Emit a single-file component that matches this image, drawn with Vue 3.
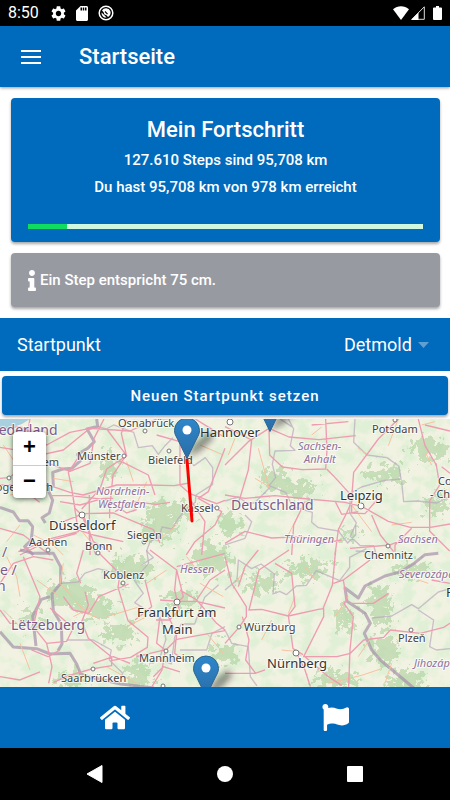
<template>
  <div class="page">
    <!-- Statusleiste -->
    <div class="status-bar">
      <div class="status-group">
        <span class="clock">8:50</span>
        <svg viewBox="2 2 20 20" width="15" height="15">
          <path fill="#fff" d="M19.14 12.94c.04-.3.06-.61.06-.94 0-.32-.02-.64-.07-.94l2.03-1.58c.18-.14.23-.41.12-.61l-1.92-3.32c-.12-.22-.37-.29-.59-.22l-2.39.96c-.5-.38-1.03-.7-1.62-.94l-.36-2.54c-.04-.24-.24-.41-.48-.41h-3.84c-.24 0-.43.17-.47.41l-.36 2.54c-.59.24-1.13.57-1.62.94l-2.39-.96c-.22-.08-.47 0-.59.22L2.74 8.87c-.12.21-.08.47.12.61l2.03 1.58c-.05.3-.09.63-.09.94s.02.64.07.94l-2.03 1.58c-.18.14-.23.41-.12.61l1.92 3.32c.12.22.37.29.59.22l2.39-.96c.5.38 1.03.7 1.62.94l.36 2.54c.05.24.24.41.48.41h3.84c.24 0 .44-.17.47-.41l.36-2.54c.59-.24 1.13-.56 1.62-.94l2.39.96c.22.08.47 0 .59-.22l1.92-3.32c.12-.22.07-.47-.12-.61l-2.01-1.58zM12 15.6c-1.98 0-3.6-1.62-3.6-3.6s1.62-3.6 3.6-3.6 3.6 1.62 3.6 3.6-1.62 3.6-3.6 3.6z" />
        </svg>
        <svg viewBox="4 2 16 20" width="12" height="15">
          <path fill="#fff" d="M18 2h-8L4 8v12c0 1.100.9 2 2 2h12c1.100 0 2-.9 2-2V4c0-1.100-.9-2-2-2zm-6 6h-2V4h2v4zm3 0h-2V4h2v4zm3 0h-2V4h2v4z" />
        </svg>
        <svg viewBox="0 0 16 16" width="16" height="16">
          <circle cx="8" cy="8" r="6.800" fill="none" stroke="#fff" stroke-width="1.500" />
          <path d="M4 5.500a4.700 4.700 0 0 1 8.300.6c1 2.400-.2 5-2.300 5.900L8.200 9.900a2.200 2.200 0 0 1-2.400-2.400zM3.600 7.500l5 5c-2.800.6-5.400-1.800-5-5z" fill="#fff" />
          <path d="M7 6.500l2.500 2.600" stroke="#000" stroke-width="1.200" />
        </svg>
      </div>
      <div class="status-group right">
        <svg viewBox="0 0 16 14" width="16" height="14">
          <path d="M0 3.200C4.500-.9 11.500-.9 16 3.200L8 14z" fill="#fff" />
        </svg>
        <svg viewBox="0 0 14 14" width="14" height="14">
          <path d="M13.300.8v12.500H.9z" fill="none" stroke="#ddd" />
          <path d="M7.500 6.500V14H0z" fill="#fff" />
        </svg>
        <svg class="battery" viewBox="0 0 9 14" width="9" height="14">
          <path d="M3 0h3v1.500h2a1 1 0 0 1 1 1V13a1 1 0 0 1-1 1H1a1 1 0 0 1-1-1V2.500a1 1 0 0 1 1-1h2z" fill="#fff" />
        </svg>
      </div>
    </div>

    <header class="toolbar">
      <button class="menu-button" type="button" aria-label="Menü">
        <svg viewBox="0 0 20 14" width="20" height="14">
          <path d="M0 1h20M0 7h20M0 13h20" stroke="#fff" stroke-width="2" />
        </svg>
      </button>
      <h1>Startseite</h1>
    </header>

    <main class="content">
      <!-- Fortschritt -->
      <section class="card progress-card">
        <h2>Mein Fortschritt</h2>
        <p>{{ steps }} Steps sind {{ format(reachedKm) }} km</p>
        <p>Du hast {{ format(reachedKm) }} km von {{ totalKm }} km erreicht</p>
        <div class="progress" role="progressbar" aria-label="Fortschritt" :aria-valuenow="reachedKm" :aria-valuemax="totalKm">
          <div class="progress-value" :style="{ width: percent + '%' }"></div>
        </div>
      </section>

      <section class="card info-card">
        <svg viewBox="0 0 192 512" width="8" height="21">
          <path fill="#fff" d="M20 424.229h20V279.771H20c-11.046 0-20-8.954-20-20V212c0-11.046 8.954-20 20-20h112c11.046 0 20 8.954 20 20v212.229h20c11.046 0 20 8.954 20 20V492c0 11.046-8.954 20-20 20H20c-11.046 0-20-8.954-20-20v-47.771c0-11.046 8.954-20 20-20zM96 0C56.235 0 24 32.235 24 72s32.235 72 72 72 72-32.235 72-72S135.764 0 96 0z" />
        </svg>
        <span>Ein Step entspricht 75 cm.</span>
      </section>

      <!-- Auswahl Startpunkt -->
      <div class="select-item">
        <label for="startpunkt">Startpunkt</label>
        <div class="select-wrap">
          <select id="startpunkt" v-model="startpunkt">
            <option>Detmold</option>
          </select>
          <svg viewBox="0 0 11 6" width="11" height="6">
            <path d="M0 0h11L5.500 6z" fill="#5f9fd4" />
          </svg>
        </div>
      </div>

      <button class="start-button" type="button">Neuen Startpunkt setzen</button>

      <!-- Karte -->
      <div class="map">
        <svg class="map-canvas" viewBox="0 0 450 268" preserveAspectRatio="xMidYMid slice">
          <defs>
            <filter id="forest" x="0" y="0" width="100%" height="100%">
              <feTurbulence type="fractalNoise" baseFrequency="0.07" numOctaves="5" seed="11" />
              <feColorMatrix values="0 0 0 0 0.74  0 0 0 0 0.87  0 0 0 0 0.67  4 0 0 0 -1.700" />
            </filter>
            <filter id="rough" x="-20%" y="-20%" width="140%" height="140%">
              <feTurbulence type="fractalNoise" baseFrequency="0.15" numOctaves="4" seed="4" />
              <feDisplacementMap in="SourceGraphic" scale="34" xChannelSelector="R" yChannelSelector="G" />
              <feGaussianBlur stdDeviation="0.600" />
            </filter>
            <filter id="soft" x="-50%" y="-50%" width="200%" height="200%">
              <feGaussianBlur stdDeviation="3" />
            </filter>
            <linearGradient id="pin" x1="0" y1="0" x2="0" y2="1">
              <stop offset="0" stop-color="#2e87cb" />
              <stop offset="1" stop-color="#2a6ca7" />
            </linearGradient>
          </defs>

          <rect width="450" height="268" fill="#f2f2e2" />
          <rect width="450" height="268" filter="url(#forest)" />
          <g fill="#add19e" opacity="0.600" filter="url(#rough)">
            <ellipse v-for="(w, i) in woods" :key="i" :cx="w[0]" :cy="w[1]" :rx="w[2]" :ry="w[3]" />
          </g>
          <path d="M0 0h30l-8 5-9 3-6 6-7 1z" fill="#a9d0df" />

          <!-- je Kachel: Grenzen, Nebenstraßen, Autobahnen -->
          <g v-for="tile in tiles" :key="tile.id" :transform="tile.transform" fill="none" stroke-linejoin="round">
            <path :d="tile.regions" stroke="#b9a8bd" stroke-width="4" opacity="0.700" />
            <path :d="tile.borders" stroke="#a592aa" stroke-width="9" opacity="0.700" />
            <path :d="tile.minor" stroke="#f9c0a0" stroke-width="3" />
            <path :d="tile.roads" stroke="#ee9cb0" stroke-width="4" />
          </g>

          <circle v-for="(t, i) in towns" :key="i" :cx="t[0]" :cy="t[1]" :r="t[2]" fill="#fff" stroke="#777" />

          <text v-for="(l, i) in labels" :key="i" :x="l.x" :y="l.y" :class="l.type" :text-anchor="l.anchor">{{ l.text }}</text>

          <path d="M187 41L192 102" stroke="#f00" stroke-width="3" stroke-linecap="round" />

          <g v-for="(m, i) in markers" :key="i" :transform="`translate(${m[0]} ${m[1]})`">
            <path d="M0 40L8 25 22 13l5 7-13 13z" opacity="0.400" filter="url(#soft)" />
            <path d="M0 40.500L-9.500 21C-11 18-12.500 16-12.500 12.500a12.500 12.500 0 0 1 25 0C12.500 16 11 18 9.500 21z" fill="url(#pin)" stroke="#2b6593" />
            <circle cy="12" r="4.500" fill="#fff" />
          </g>
        </svg>
        <div class="zoom-control">
          <button type="button" aria-label="Vergrößern">+</button>
          <button type="button" aria-label="Verkleinern">−</button>
        </div>
      </div>
    </main>

    <nav class="tab-bar">
      <a href="#home" aria-label="Startseite">
        <svg viewBox="0 0 576 512" width="30" height="27">
          <path fill="#fff" d="M280.370 148.260L96 300.110V464a16 16 0 0 0 16 16l112.060-.29a16 16 0 0 0 15.920-16V368a16 16 0 0 1 16-16h64a16 16 0 0 1 16 16v95.640a16 16 0 0 0 16 16.050L464 480a16 16 0 0 0 16-16V300L295.670 148.260a12.190 12.190 0 0 0-15.300 0zM571.600 251.470L488 182.560V44.050a12 12 0 0 0-12-12h-56a12 12 0 0 0-12 12v72.610L318.470 43a48 48 0 0 0-61 0L4.340 251.470a12 12 0 0 0-1.600 16.900l25.500 31A12 12 0 0 0 45.150 301l235.220-193.740a12.190 12.190 0 0 1 15.300 0L530.900 301a12 12 0 0 0 16.900-1.600l25.500-31a12 12 0 0 0-1.700-16.930z" />
        </svg>
      </a>
      <a href="#ziel" aria-label="Ziele">
        <svg viewBox="0 0 512 512" width="27" height="27">
          <path fill="#fff" d="M349.565 98.783C295.978 98.783 251.721 64 184.348 64c-24.955 0-47.309 4.384-68.045 12.013a55.947 55.947 0 0 0 3.586-23.562C118.117 24.015 94.806 1.206 66.338.048 34.345-1.254 8 24.296 8 56c0 19.026 9.497 35.825 24 45.945V488c0 13.255 10.745 24 24 24h16c13.255 0 24-10.745 24-24v-94.400c28.311-12.064 63.582-22.122 114.435-22.122 53.588 0 97.844 34.783 165.217 34.783 48.169 0 86.667-16.294 122.505-40.858C506.840 359.452 512 349.571 512 339.045v-243.100c0-23.393-24.269-38.870-45.485-29.016-34.338 15.948-76.454 31.854-116.950 31.854z" />
        </svg>
      </a>
    </nav>

    <!-- Android Navigation -->
    <div class="system-nav">
      <button type="button" aria-label="Zurück">
        <svg viewBox="0 0 18 18" width="18" height="18"><path d="M1 9L16 .5v17z" fill="#fff" stroke="#fff" stroke-linejoin="round" /></svg>
      </button>
      <button type="button" aria-label="Home">
        <svg viewBox="0 0 18 18" width="18" height="18"><circle cx="9" cy="9" r="8" fill="#fff" /></svg>
      </button>
      <button type="button" aria-label="Übersicht">
        <svg viewBox="0 0 18 18" width="18" height="18"><rect x="1" y="1" width="16" height="16" rx="1" fill="#fff" /></svg>
      </button>
    </div>
  </div>
</template>

<script setup>
import { ref, computed } from 'vue'

const steps = '127.610'
const reachedKm = ref(95.708)
const totalKm = ref(978)
const startpunkt = ref('Detmold')

const percent = computed(() => (reachedKm.value / totalKm.value) * 100)

// Zahl mit deutschem Komma
const format = (km) => String(km).replace('.', ',')

// Oberkante Mitte der Marker
const markers = [
  [187, -1],
  [270, -28],
  [206, 237],
]

const woods = [
  [170, 92, 26, 9], [160, 110, 18, 12], [275, 60, 14, 11], [300, 70, 20, 7],
  [110, 48, 7, 14], [210, 140, 20, 16], [130, 150, 22, 12], [70, 175, 22, 14],
  [95, 190, 18, 12], [120, 215, 16, 10], [140, 255, 12, 13], [70, 260, 18, 7],
  [180, 180, 14, 10], [225, 235, 14, 12], [260, 165, 18, 9], [310, 150, 22, 9],
  [345, 200, 10, 12], [380, 185, 12, 20], [385, 230, 14, 16], [405, 262, 20, 10],
  [430, 30, 18, 12], [385, 55, 20, 8], [435, 85, 12, 9], [350, 115, 10, 5],
  [30, 200, 12, 10], [230, 105, 12, 10], [335, 260, 22, 8], [410, 150, 18, 8],
]

const towns = [
  [145, 12, 2], [124, 37, 2], [169, 32, 2], [217, 89, 2], [82, 96, 3],
  [144, 123, 2], [48, 131, 2], [98, 134, 2], [230, 3, 3], [395, 1, 2],
  [361, 87, 3], [388, 127, 2], [123, 164, 2], [177, 183, 3], [166, 232, 2],
  [93, 250, 2], [163, 267, 2], [239, 208, 2], [296, 234, 3], [411, 211, 2], [9, 59, 2],
]

const labels = [
  { text: 'Nederland', x: -12, y: 16, type: 'country' },
  { text: 'Osnabrück', x: 118, y: 8, type: 'town' },
  { text: 'Hannover', x: 200, y: 18, type: 'city' },
  { text: 'Arnhem', x: 59, y: 47, type: 'town', anchor: 'end' },
  { text: "'s-Hertogenbosch", x: 53, y: 72, type: 'town', anchor: 'end' },
  { text: 'Münster', x: 77, y: 41, type: 'town' },
  { text: 'Bielefeld', x: 148, y: 45, type: 'town' },
  { text: 'Nordrhein-', x: 96, y: 76, type: 'state' },
  { text: 'Westfalen', x: 98, y: 89, type: 'state' },
  { text: 'Kassel', x: 181, y: 93, type: 'town' },
  { text: 'Düsseldorf', x: 49, y: 111, type: 'city' },
  { text: 'Siegen', x: 127, y: 120, type: 'town' },
  { text: 'Aachen', x: 29, y: 127, type: 'town' },
  { text: 'Bonn', x: 85, y: 131, type: 'town' },
  { text: 'Potsdam', x: 372, y: 14, type: 'town' },
  { text: 'Sachsen-', x: 298, y: 31, type: 'state' },
  { text: 'Anhalt', x: 304, y: 44, type: 'state' },
  { text: 'Cottbus', x: 438, y: 66, type: 'town' },
  { text: '- Chóśebuz', x: 430, y: 79, type: 'town' },
  { text: 'Leipzig', x: 340, y: 81, type: 'city' },
  { text: 'Deutschland', x: 231, y: 91, type: 'country' },
  { text: 'Thüringen', x: 284, y: 124, type: 'state' },
  { text: 'Sachsen', x: 398, y: 124, type: 'state' },
  { text: 'Chemnitz', x: 364, y: 140, type: 'town' },
  { text: '/', x: 2, y: 138, type: 'country' },
  { text: 'e /', x: 0, y: 156, type: 'country' },
  { text: 'n', x: -3, y: 172, type: 'country' },
  { text: 'Koblenz', x: 103, y: 160, type: 'town' },
  { text: 'Hessen', x: 180, y: 154, type: 'state' },
  { text: 'Severozápad', x: 399, y: 159, type: 'state' },
  { text: 'Praha', x: 446, y: 178, type: 'city' },
  { text: 'Frankfurt am', x: 137, y: 198, type: 'city' },
  { text: 'Main', x: 162, y: 215, type: 'city' },
  { text: 'Lëtzebuerg', x: 11, y: 211, type: 'country' },
  { text: 'Würzburg', x: 244, y: 212, type: 'town' },
  { text: 'Plzeň', x: 398, y: 223, type: 'town' },
  { text: 'Mannheim', x: 139, y: 243, type: 'town' },
  { text: 'Nürnberg', x: 267, y: 249, type: 'city' },
  { text: 'Jihozápad', x: 414, y: 248, type: 'state' },
  { text: 'Saarbrücken', x: 61, y: 263, type: 'town' },
]

// Linien der vier Kacheln, jeweils im dreifachen Maßstab gezeichnet
const tiles = [
  {
    id: 'nw',
    transform: 'translate(0 -4) scale(0.3333)',
    borders: 'M290 12l3 22-32 8 22 38-20 20-30 18 8 20-25 22-28 2-30 10 2 40-16 12 14 32-10 38-22 14 10 16M0 277l40 14 18 26 26 0 14 18-4 40-20 20 26 25',
    regions: 'M293 34l26 8 22-12 60 22 14 46 42-6 18 26 20-26 24-24M560 130l22 22 34-24 22 30 0 50-50 32-2 22-30 22-22 28-18 30-30-6-8 30-28 14-10 28 20 20-36 22',
    minor: 'M10 90l40 60 30 10M30 240l70-10M100 360l60 30 30 30M380 140l20 60M440 200l-40 90M470 380l60-50M600 90l70 30M230 330l50 60M160 190l60 10M20 380l40-50',
    roads: 'M0 40l60-5 30 15 50 40 70-38 60-12 120 8 80-36 110-4 95 60M0 97l60 10 90 40 60 22 60-24 12-75 30-58M90 12l-15 80 14 60-10 80 40 30M0 190l30-3 70-62 90-20 80-65M0 210l60 0 90 2 60 20 40 8 100-30 95 0 78 2 45-8M245 112l-40 60 10 48 10 60 20 20 25 60 0 60M380 15l-16 40 15 65-40 60-10 100 0 30M345 130l100 50 20 60M470 60l70 20 0 130 30 26 80 30 25-10M320 42l60 80-60 40-20 60-55 60M675 100l-50 130-30 20 70 40-20 40-60 50-26 40M575 260l40 60-10 100M150 242l60 0 110 12 60 40 30-10M215 220l20 130-80 20-100 40M180 260l60 10 70-20 30 0M190 320l60-24 90-2 120 50 20 40M250 300l30 80 50 30M220 340l60 20 90 20M60 420l80-40 90-25M0 340l70 20 80 60M345 290l55-30 70 8 40-6M268 240l0 130 20 50',
  },
  {
    id: 'ne',
    transform: 'translate(225 -4) scale(0.3333)',
    borders: '',
    regions: 'M190 12l16 30-10 50 14 14-60 2-8 40 10 40-20 24 50 20 20 42 60 18-2 30 20 16 60 10 28 36 24-24 0-30M165 12l40 26M390 12l-4 70 40 38 60 8 36 26 6 38-50 4-68 20-34 18-2 60 20 30-18 40 30 28 40 0 6 20-60-4M530 200l6 60 40-2 60 6 38-20M0 258l40-12 26 18 22 0 50-50M60 300l20 20-20 50-60 20',
    minor: 'M100 100l30 110M30 70l-20 50M520 12l-30 80M590 30l40-10M90 190l50 30M190 360l30-60M500 330l60-8M600 110l20 40M380 270l60 80M400 100l30 20M260 60l30-24',
    roads: 'M0 35l80 40-10 90-30 100M0 150l70-70 62-40 60 26 90 8 110-12M132 40l2 80 38 36 60 8 70-2 4-56-4-94M305 162l20 20 60 66-20 46-25 50-10 76M0 240l60 10 90-8 100 10 110 10 50 12 80 45 66 18 60 0 59-10M520 12l-60 60-74 100-6 78 0 44 40 2 40-46M580 12l20 80 34 58 10 60-30 48 0 90 60 60M260 30l110-10M600 30l75 18M650 155l25 20M0 385l60-36 80 20 90-4 60 20 60-10M240 260l-34 70-6 90M440 300l26 60 40 50M330 258l20 40 50-8M560 340l-50 50 0 20M375 400l120-10 50-20',
  },
  {
    id: 'sw',
    transform: 'translate(0 131) scale(0.3333)',
    borders: 'M0 245l40 46 70 5 40 16 60-2 20 32 12 30 30 10 90 20 100 12M60 0l40 10 60 0 22 40 0 50-26 32 4 50 24 40 2 60-12 20M150 140l-26 8-26 50 10 90',
    regions: 'M184 100l50-4 20-26 40-14 52 12M440 0l6 40-44 50 28 40-26 28 80 50 14 60-20 60 36 14 10-80 20-40 40 0 30-80 42-38M200 270l80 0 54 30-6 30 40 40-10 30M540 300l80 0 16-50 39-20',
    minor: 'M20 20l30 60 10 60M190 40l-10 60 80 90 40 16M220 200l60-30M320 200l100-30M380 230l60-30M10 180l60 60M60 280l30 80M560 20l40 50M600 100l70 40M320 350l90 50M440 100l60-40M620 250l50 60M110 90l70 50',
    roads: 'M0 100l40-60 60-20 60 10M70 20l50 120-20 90 40 50 16 70-10 50M250 0l-20 70 12 30M300 12l60 60-6 40 30 100 60 50-2 30-50 30-60 10M255 125l10 40-20 50 20 50 70 56 0 26-60 10-70 20-44 20M190 140l30 40 46 10 30-50 90-38M450 0l80 60-6 60 14 60-30 30-40 0M530 50l145-40M540 120l50 30 40-60 45-30M140 280l60-6 20-40-70-60M480 200l-10 80 26 20-10 60-30 50M500 190l30 60-6 60 40 26M410 320l90-22 30-30 145-26M0 380l60 10 60-24M180 300l-36 20-50-20M435 90l20 80-50 40M590 150l60 70 25 20M280 340l60-20 50 20M480 150l60 4 50 0 85 20M460 380l30-30 50 16M530 60l20 80-30 30M0 180l30 40 20 0',
  },
  {
    id: 'se',
    transform: 'translate(225 131) scale(0.3333)',
    borders: 'M640 10l-40 4-30 24-40 26-50 14-60 30-20 36-40-30 6 40 54 36 16 30-18 30 22 50 26 30 100 84',
    regions: 'M0 120l36-30 4-60 40 26 28-14 40 30-4 60 20-8 20 10 30-26 30-2 30-44 70 30 30-40 0-30 50-26M440 204l60-6 60-34 20 12 60-50 35-10M580 180l46 30-12 80 20 10 41-4M0 240l20 40 50 10 6 90 20 28',
    minor: 'M170 300l40 4 20 14M240 50l30 40M110 270l30-60M580 90l30 10M480 400l20-60M310 400l100-24 60-20M60 60l-30 40M190 190l20-50M330 200l40-60M400 320l40-60',
    roads: 'M0 20l20 80 44 70 0 30-20 30-44 50M70 180l40-2 80 20 90-20 16-2 0 24-40 80-20 40 100 0 40-10 40-40 60-8 20-22 90 10 70-18 110-70M72 180l30-120 90-60M100 0l-40 50-20 60M150 40l50 30 10 100-20 26 14 100 30 18M294 176l28-70 10-106M325 100l30-10 80-60M355 90l10 60-8 10 28 40-10 100-4 110M210 300l30 60 16 50M240 320l70 60 40 26M52 200l20 70-10 60 30 40-92 0M120 360l-30 10M375 160l70 0 46-30M620 90l55 10',
  },
]
</script>

<style>
body {
  margin: 0;
  background: #fff;
}
</style>

<style scoped>
.page {
  display: flex;
  flex-direction: column;
  min-height: 100vh;
  font-family: Roboto, "Liberation Sans", sans-serif;
  color: #fff;
}
button {
  border: 0;
  padding: 0;
  background: none;
  color: inherit;
  font-family: inherit;
}
svg {
  display: block;
}
h1,
h2,
p {
  margin: 0;
  font-weight: 500;
}
.status-bar {
  display: flex;
  justify-content: space-between;
  align-items: center;
  height: 26px;
  padding: 0 8px;
  background: #000;
}
.status-group {
  display: flex;
  align-items: center;
  gap: 10px;
}
.status-group.right {
  gap: 2px;
}
.battery {
  margin-left: 6px;
}
.clock {
  margin-right: 2px;
  font-size: 16px;
  line-height: 26px;
}
.toolbar {
  position: relative;
  display: flex;
  align-items: center;
  gap: 38px;
  height: 60px;
  padding: 1px 21px 0;
  background: #006abc;
  box-shadow: 0 1px 3px rgba(0, 0, 0, 0.4);
}
h1,
h2 {
  font-size: 22px;
  line-height: 26px;
}
.content {
  display: flex;
  flex-direction: column;
  flex: 1;
  padding-top: 11px;
}
.card {
  margin: 0 10px 11px 11px;
  border-radius: 4px;
  box-shadow: 0 2px 3px rgba(0, 0, 0, 0.35);
  font-size: 15px;
  font-weight: 500;
}
.progress-card {
  padding: 19px 17px 13px;
  background: #006abc;
  text-align: center;
}
.progress-card h2 {
  margin-bottom: 4px;
}
.progress-card p {
  line-height: 27px;
}
.progress {
  height: 5px;
  margin-top: 23px;
  background: #cff8df;
}
.progress-value {
  height: 100%;
  background: #10dc60;
}
.info-card {
  display: flex;
  align-items: center;
  gap: 4px;
  height: 54px;
  padding: 0 17px;
  background: #989aa2;
}
.select-item {
  display: flex;
  align-items: center;
  justify-content: space-between;
  height: 53px;
  padding: 0 21px 0 17px;
  background: #006abc;
  font-size: 18px;
}
.select-wrap {
  display: flex;
  align-items: center;
  gap: 6px;
}
select {
  appearance: none;
  border: 0;
  padding: 0;
  background: none;
  color: inherit;
  font: inherit;
}
.start-button {
  height: 39px;
  margin: 5px 2px 4px;
  border-radius: 4px;
  background: #006abc;
  box-shadow: 0 2px 3px rgba(0, 0, 0, 0.35);
  font-size: 15px;
  font-weight: 500;
  letter-spacing: 1px;
}
.map {
  position: relative;
  flex: 1;
  min-height: 200px;
  overflow: hidden;
}
.map-canvas {
  position: absolute;
  width: 100%;
  height: 100%;
  font-family: "Noto Sans", sans-serif;
}
.map-canvas text {
  paint-order: stroke;
  stroke: rgba(255, 255, 255, 0.7);
  stroke-width: 2px;
  stroke-linejoin: round;
}
.town {
  font-size: 11px;
  fill: #444;
}
.city {
  font-size: 13px;
  fill: #333;
}
.state {
  font-size: 11px;
  font-style: italic;
  fill: #90719b;
}
.country {
  font-size: 14px;
  fill: #7d5a88;
}
.zoom-control {
  position: absolute;
  top: 13px;
  left: 13px;
  display: flex;
  flex-direction: column;
  width: 33px;
  border-radius: 4px;
  background: #fff;
  box-shadow: 0 1px 5px rgba(0, 0, 0, 0.6);
}
.zoom-control button {
  height: 33px;
  padding-bottom: 3px;
  color: #000;
  font-family: "Liberation Sans", sans-serif;
  font-size: 22px;
  font-weight: bold;
  line-height: 30px;
}
.zoom-control button + button {
  border-top: 1px solid #ccc;
}
.tab-bar {
  display: grid;
  grid-template-columns: 1fr 1fr;
  height: 61px;
  padding: 0 5px;
  background: #006abc;
}
.tab-bar a {
  display: flex;
  align-items: center;
  justify-content: center;
}
.system-nav {
  display: flex;
  justify-content: center;
  align-items: center;
  gap: 112px;
  height: 52px;
  background: #000;
}
</style>
